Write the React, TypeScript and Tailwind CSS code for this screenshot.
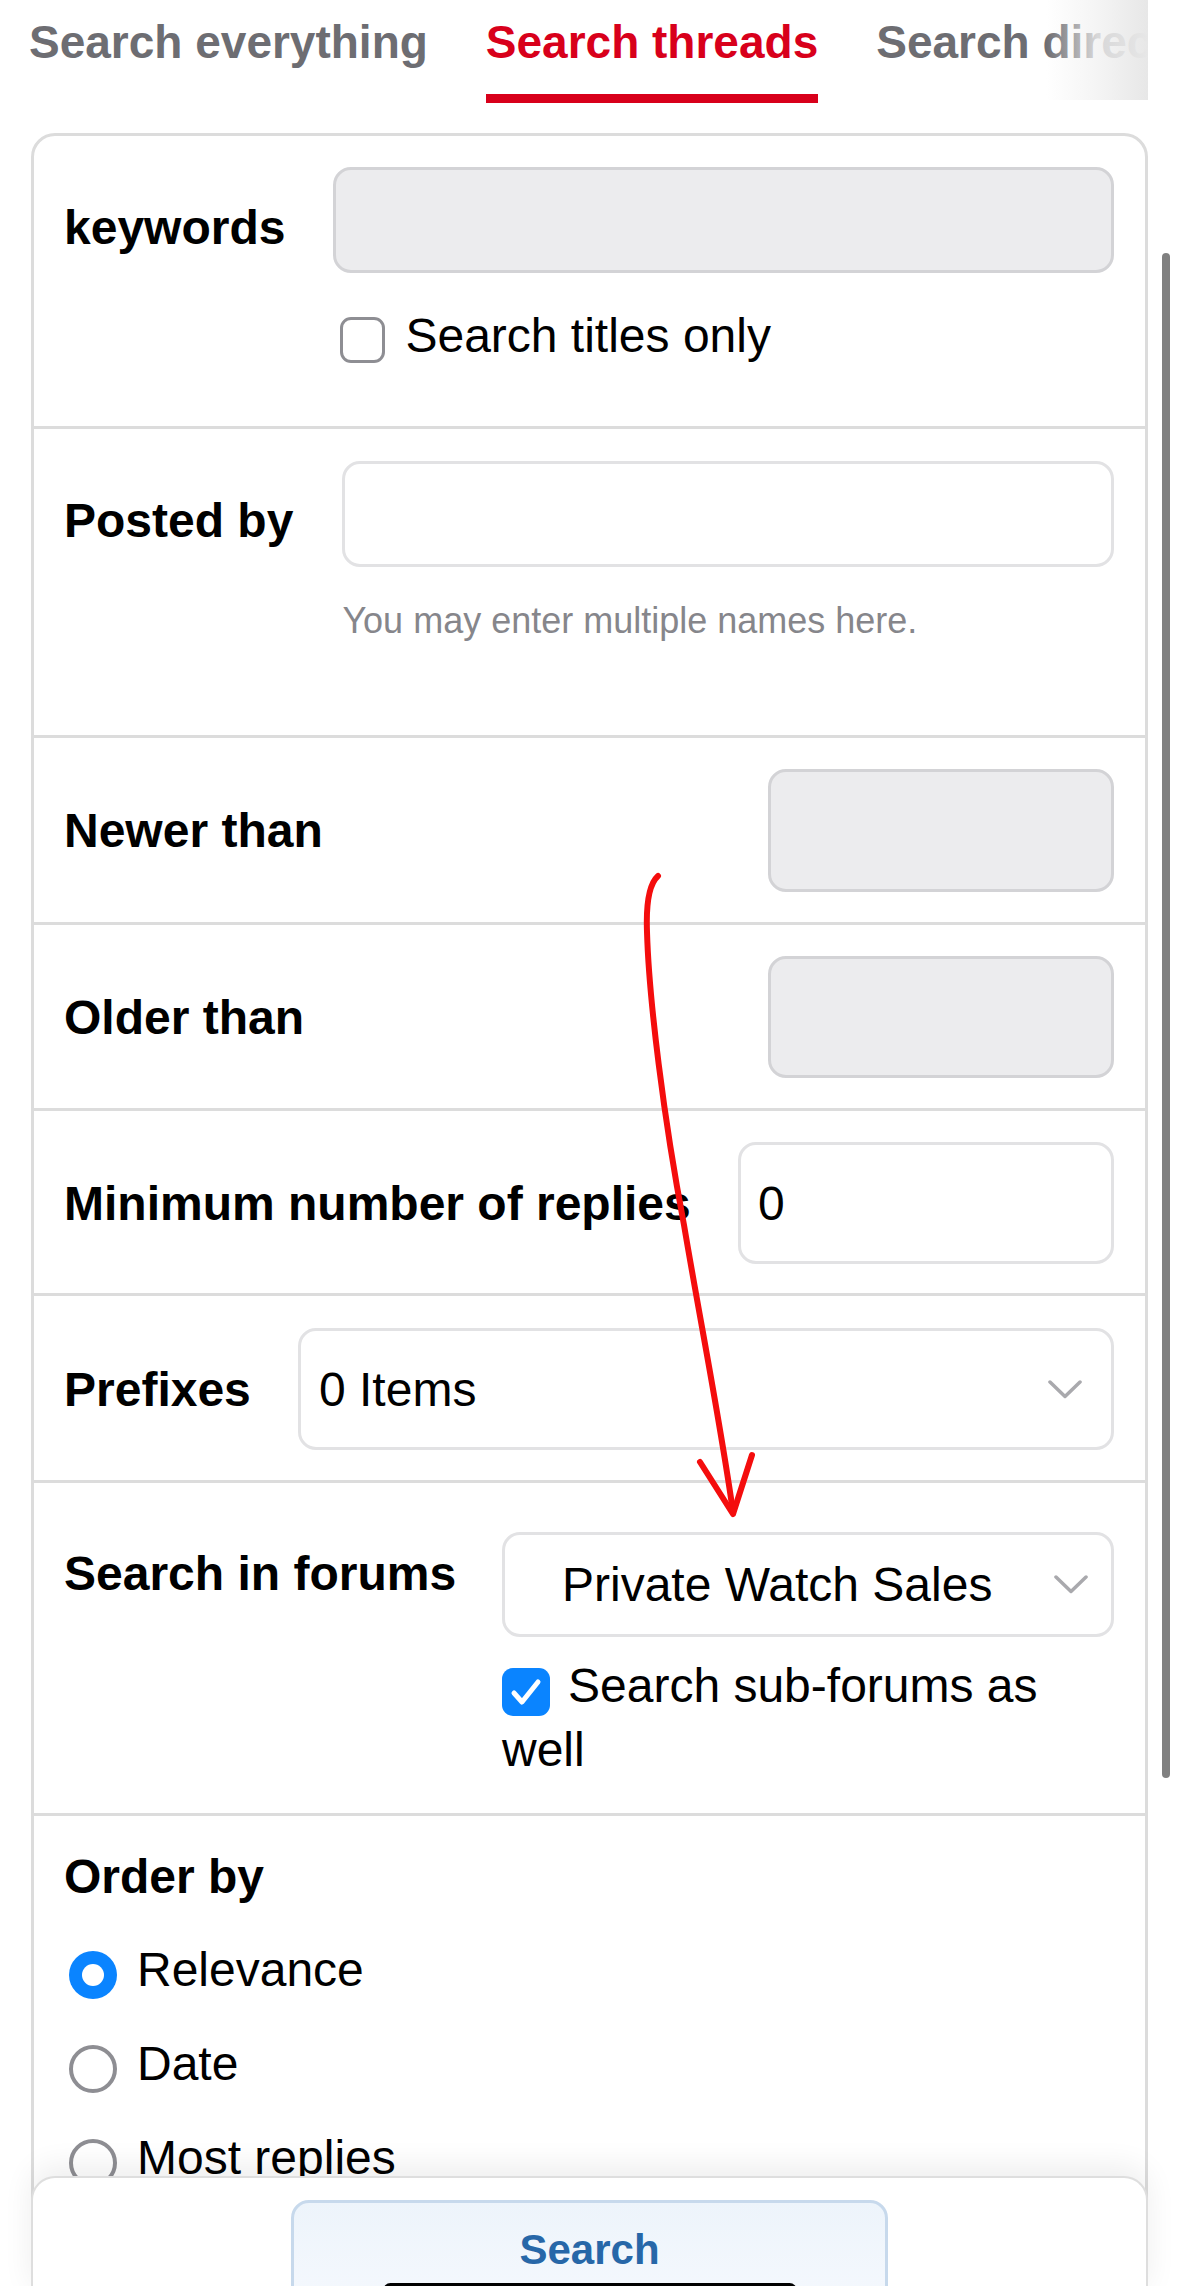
import React from 'react'

const tabs = ['Search everything', 'Search threads', 'Search directory']

function Chevron() {
  return (
    <svg width="34" height="19" viewBox="0 0 34 19" fill="none">
      <polyline points="2,2 17,16.5 32,2" stroke="#a9a9ad" strokeWidth="3.5" strokeLinecap="round" strokeLinejoin="round" />
    </svg>
  )
}

function Row({ children, className }: { children: React.ReactNode; className: string }) {
  return <div className={`border-b-[3px] border-[#dcdcdc] pl-[30px] pr-[31px] ${className}`}>{children}</div>
}

function Radio({ label, checked }: { label: string; checked?: boolean }) {
  return (
    <div className="flex items-start">
      {checked ? (
        <div className="ml-[5px] mt-[9px] flex h-[48px] w-[48px] items-center justify-center rounded-full bg-[#0a84ff]">
          <div className="h-[22px] w-[22px] rounded-full bg-white" />
        </div>
      ) : (
        <div className="ml-[5px] mt-[9px] h-[48px] w-[48px] rounded-full border-[4px] border-[#8e8e93]" />
      )}
      <span className="ml-[20px] text-[48px] leading-[55px]">{label}</span>
    </div>
  )
}

export default function App() {
  return (
    <div className="relative h-[2286px] w-[1179px] overflow-hidden bg-white font-['Liberation_Sans',Arial,sans-serif] text-black">
      {/* Tabs */}
      <div className="relative flex w-[1148px] overflow-hidden pt-[16px]">
        {tabs.map((t, i) => (
          <div key={t} className="shrink-0 px-[29px]">
            <div
              className={`whitespace-nowrap text-[46px] font-bold leading-[52px] ${
                i === 1 ? 'text-[#d8001b]' : 'text-[#6d6d72]'
              }`}
            >
              {t}
            </div>
            <div className={`mt-[26px] h-[9px] ${i === 1 ? 'bg-[#d8001b]' : ''}`} />
          </div>
        ))}
        <div className="absolute right-0 top-0 h-[100px] w-[102px] bg-linear-to-r from-white/0 via-[#f2f2f2]/80 to-[#e7e7e7]" />
      </div>

      {/* Form card */}
      <div className="ml-[31px] mt-[30px] w-[1117px] rounded-[24px] border-[3px] border-[#dcdcdc] bg-white">
        <Row className="flex gap-[48px] pb-[63px] pt-[31px]">
          <div className="pt-[33px] text-[48px] font-bold leading-[55px]">keywords</div>
          <div className="flex-1">
            <div className="h-[106px] rounded-[18px] border-[3px] border-[#d3d3d6] bg-[#ececee]" />
            <div className="mt-[35px] flex items-start gap-[20px] pl-[7px]">
              <div className="mt-[9px] h-[46px] w-[45px] rounded-[11px] border-[3px] border-[#8e8e93]" />
              <span className="text-[48px] leading-[55px]">Search titles only</span>
            </div>
          </div>
        </Row>

        <Row className="flex gap-[49px] pb-[94px] pt-[32px]">
          <div className="pt-[32px] text-[48px] font-bold leading-[55px]">Posted by</div>
          <div className="flex-1">
            <div className="h-[106px] rounded-[18px] border-[3px] border-[#e2e2e4] bg-white" />
            <div className="mt-[33px] text-[36px] leading-[41px] text-[#86868b]">You may enter multiple names here.</div>
          </div>
        </Row>

        <Row className="flex items-center justify-between pb-[30px] pt-[31px]">
          <div className="text-[48px] font-bold leading-[55px]">Newer than</div>
          <div className="h-[123px] w-[346px] rounded-[18px] border-[3px] border-[#d3d3d6] bg-[#ececee]" />
        </Row>

        <Row className="flex items-center justify-between pb-[30px] pt-[31px]">
          <div className="text-[48px] font-bold leading-[55px]">Older than</div>
          <div className="h-[122px] w-[346px] rounded-[18px] border-[3px] border-[#d3d3d6] bg-[#ececee]" />
        </Row>

        <Row className="flex items-center justify-between pb-[29px] pt-[31px]">
          <div className="whitespace-nowrap text-[48px] font-bold leading-[55px]">Minimum number of replies</div>
          <div className="flex h-[122px] w-[376px] shrink-0 items-center rounded-[18px] border-[3px] border-[#e2e2e4] bg-white pl-[17px] text-[48px] leading-[55px]">
            0
          </div>
        </Row>

        <Row className="flex items-center justify-between pb-[30px] pt-[32px]">
          <div className="text-[48px] font-bold leading-[55px]">Prefixes</div>
          <div className="flex h-[122px] w-[816px] items-center justify-between rounded-[18px] border-[3px] border-[#e2e2e4] bg-white pl-[18px] pr-[29px]">
            <span className="text-[48px] leading-[55px]">0 Items</span>
            <Chevron />
          </div>
        </Row>

        <Row className="flex items-start pb-[31px] pt-[49px]">
          <div className="flex-1 pt-[14px] text-[48px] font-bold leading-[55px]">Search in forums</div>
          <div className="w-[612px]">
            <div className="flex h-[105px] items-center justify-between rounded-[18px] border-[3px] border-[#e2e2e4] bg-white pl-[57px] pr-[23px]">
              <span className="text-[48px] leading-[55px]">Private Watch Sales</span>
              <Chevron />
            </div>
            <div className="mt-[17px] text-[48px] leading-[64px]">
              <span className="relative top-[3px] mr-[18px] inline-flex h-[48px] w-[48px] items-center justify-center rounded-[11px] bg-[#0a84ff] align-middle">
                <svg width="32" height="28" viewBox="0 0 32 28" fill="none">
                  <polyline points="4,15 12,24 28,4" stroke="white" strokeWidth="5" strokeLinecap="round" strokeLinejoin="round" />
                </svg>
              </span>
              Search sub-forums as well
            </div>
          </div>
        </Row>

        <div className="pb-[200px] pl-[30px] pt-[33px]">
          <div className="text-[48px] font-bold leading-[55px]">Order by</div>
          <div className="mt-[38px] flex flex-col gap-[37px]">
            <Radio label="Relevance" checked />
            <Radio label="Date" />
            <Radio label="Most replies" />
          </div>
        </div>
      </div>

      {/* Scrollbar */}
      <div className="absolute left-[1162px] top-[253px] h-[1525px] w-[8px] rounded-full bg-[#808080]" />

      {/* Sticky footer */}
      <div className="absolute left-[31px] top-[2176px] h-[120px] w-[1117px] rounded-t-[24px] border-[2px] border-b-0 border-[#dedede] bg-white shadow-[0_-10px_30px_rgba(0,0,0,0.07)]">
        <div className="flex justify-center pt-[22px]">
          <div className="h-[120px] w-[597px] rounded-[18px] border-[3px] border-[#c7d9ec] bg-linear-to-b from-[#edf4fb] to-[#f6f9fe] pt-[23px] text-center text-[42px] font-bold leading-[48px] text-[#2767a8]">
            Search
          </div>
        </div>
      </div>

      {/* Home indicator */}
      <div className="absolute left-[383px] top-[2283px] h-[15px] w-[414px] rounded-full bg-black" />

      {/* Red annotation arrow */}
      <svg className="pointer-events-none absolute left-0 top-0" width="1179" height="2286" viewBox="0 0 1179 2286" fill="none">
        <path
          d="M658 876 C649 884 646 905 647 932 C649 1000 664 1120 684 1225 C700 1320 720 1420 733 1512"
          stroke="#f40d0d"
          strokeWidth="6"
          strokeLinecap="round"
        />
        <polyline points="700,1462 733,1514 752,1455" stroke="#f40d0d" strokeWidth="6" strokeLinecap="round" strokeLinejoin="round" />
      </svg>
    </div>
  )
}
